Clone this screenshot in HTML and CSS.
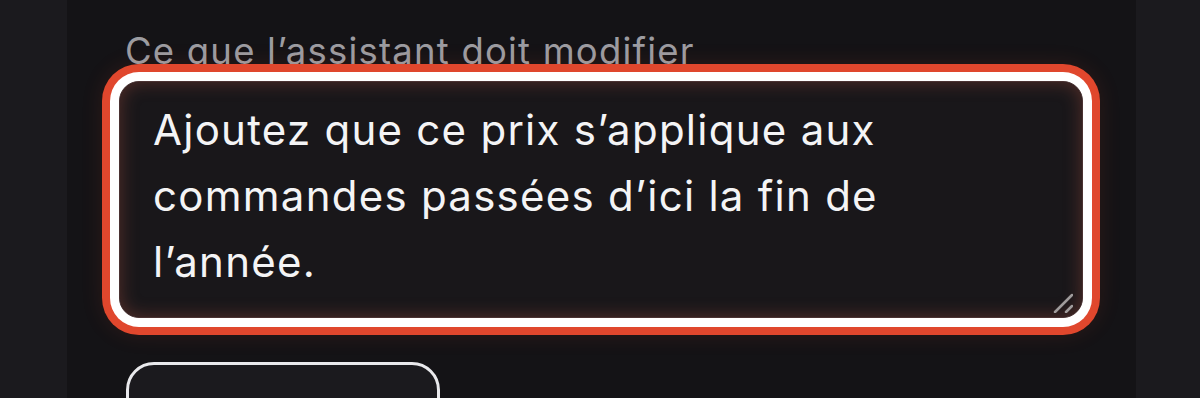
FILE: index.html
```html
<!DOCTYPE html>
<html lang="fr">
<head>
    <meta charset="UTF-8">
    <meta name="viewport" content="width=device-width, initial-scale=1.0">
    <title>Modifier la réponse</title>
    <link rel="stylesheet" href="styles.css">
</head>
<body>

<div class="panel">
    <!-- consigne pour l'assistant -->
    <div class="field">
        <label for="instruction" class="field-label">Ce que l’assistant doit modifier</label>
        <div class="input-wrap">
            <textarea id="instruction" class="field-input">Ajoutez que ce prix s’applique aux commandes passées d’ici la fin de l’année.</textarea>
            <svg class="resize-grip" width="20" height="20" viewBox="0 0 20 20">
                <line x1="2" y1="19" x2="19" y2="2" />
                <line x1="13" y1="19" x2="19" y2="13" />
            </svg>
        </div>
    </div>

    <button class="btn-secondary" type="button"></button>
</div>

</body>
</html>
```

FILE: styles.css
```css
body {
    margin: 0;
    padding: 0;
    background-color: #1b1a1e;
    font-family: Inter, "Noto Sans", sans-serif;
    height: 398px;
    overflow: hidden;
}
.panel {
    margin-left: 67px;
    width: 1069px;
    height: 398px;
    box-sizing: border-box;
    padding: 29px 0 0 52px;
    background-color: #141316;
}
.field {
    display: flex;
    flex-direction: column;
    width: 964px;
}
.field-label {
    margin-left: 6px;
    font-size: 36.5px;
    line-height: 44px;
    letter-spacing: 0.033em;
    color: #9c9ca1;
}
.input-wrap {
    position: relative;
    margin-top: 8px;
}
.field-input {
    display: block;
    width: 100%;
    height: 237px;
    box-sizing: border-box;
    padding: 15px 52px 0 33px;
    font-family: Inter, "Noto Sans", sans-serif;
    font-size: 42px;
    line-height: 66px;
    letter-spacing: 0.03em;
    color: #f4f4f5;
    background-color: #19171a;
    border: 1px solid #4a3232;
    border-radius: 20px;
    outline: none;
    resize: none;
    box-shadow: inset 0 0 18px rgba(160, 75, 60, 0.45),
                0 0 0 9px #ffffff,
                0 0 0 17px #e0472d,
                0 0 22px 17px rgba(224, 71, 45, 0.12);
}
.resize-grip {
    position: absolute;
    right: 10px;
    bottom: 5px;
    stroke: #a09c9c;
    stroke-width: 2.5;
    stroke-linecap: round;
}
.btn-secondary {
    margin: 44px 0 0 7px;
    width: 314px;
    height: 90px;
    background-color: #1b1a1e;
    border: 3px solid #e9e9ec;
    border-radius: 28px;
    cursor: pointer;
}
```
